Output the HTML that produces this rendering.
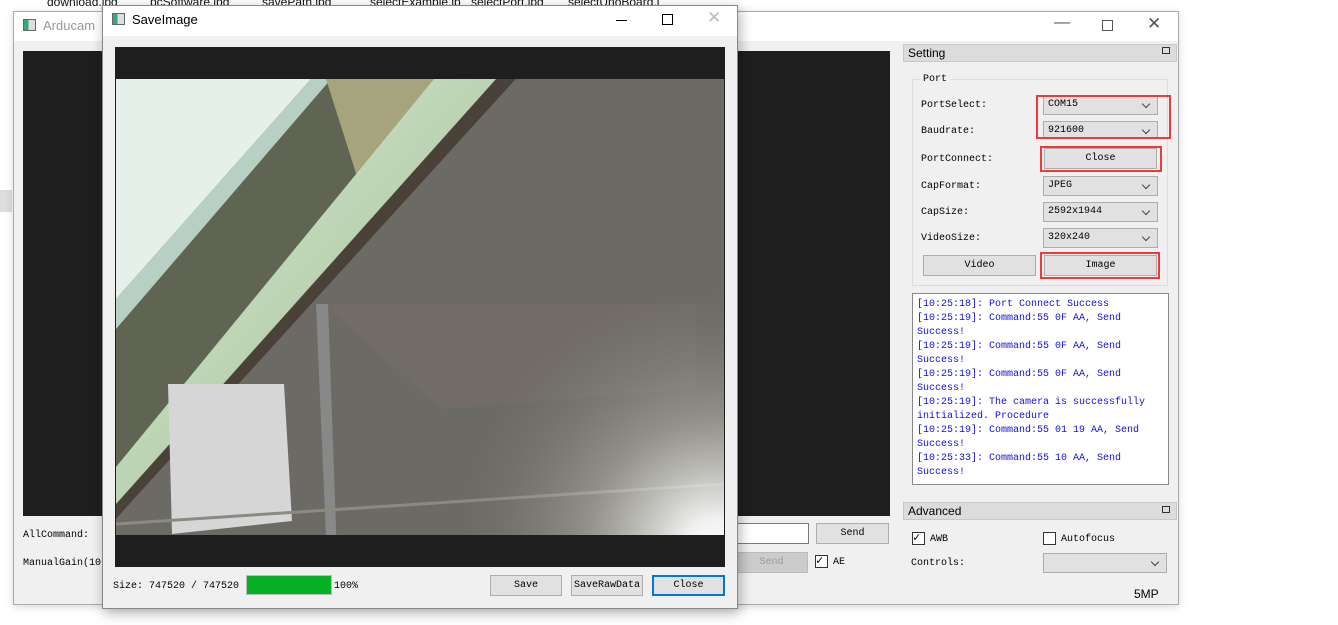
<!DOCTYPE html>
<html><head><meta charset="utf-8"><style>
*{margin:0;padding:0;box-sizing:border-box}
body{width:1338px;height:625px;background:#fff;position:relative;overflow:hidden;font-family:"Liberation Mono",monospace;font-size:10px;color:#000}
.a{position:absolute}
.btn{position:absolute;background:#e1e1e1;border:1px solid #adadad;text-align:center;font-size:10px;line-height:19px}
.cb{position:absolute;background:#e1e1e1;border:1px solid #adadad;font-size:10px;padding-left:4px;line-height:18px}
.cb:after{content:"";position:absolute;right:8px;top:5px;width:5px;height:5px;border-right:1px solid #444;border-bottom:1px solid #444;transform:rotate(45deg)}
.red{position:absolute;border:2px solid #f03a3a}
.lbl{position:absolute;font-size:10px}
.ui{font-family:"Liberation Sans",sans-serif}
.chk{position:absolute;width:13px;height:13px;border:1px solid #333;background:#fff}
.log div{line-height:14px}
</style></head><body>
<div class="a ui" style="left:0;top:0;width:1338px;height:12px;overflow:hidden;font-size:12px;color:#111">
<span class="a" style="left:47px;top:-5px">download.jpg</span><span class="a" style="left:150px;top:-5px">pcSoftware.jpg</span><span class="a" style="left:262px;top:-5px">savePath.jpg</span><span class="a" style="left:370px;top:-5px">selectExample.jp</span><span class="a" style="left:471px;top:-5px">selectPort.jpg</span><span class="a" style="left:568px;top:-5px">selectUnoBoard.j</span></div>
<div class="a" style="left:0;top:190px;width:12px;height:22px;background:#ddd"></div>
<div class="a" style="left:13px;top:11px;width:1166px;height:594px;background:#f0f0f0;border:1px solid #aaa;box-shadow:0 2px 8px rgba(0,0,0,.15)"></div>
<div class="a" style="left:14px;top:12px;width:1164px;height:29px;background:#fff"></div>
<div class="a" style="left:23px;top:19px;width:13px;height:12px;border:1px solid #666;background:linear-gradient(90deg,#3a7 0 40%,#ddd 40%)"></div>
<div class="a ui" style="left:43px;top:18px;font-size:13px;color:#999">Arducam</div>
<div class="a ui" style="left:1054px;top:14px;font-size:16px;color:#555">—</div>
<div class="a" style="left:1102px;top:20px;width:11px;height:11px;border:1px solid #555"></div>
<div class="a ui" style="left:1147px;top:14px;font-size:17px;color:#555">✕</div>
<div class="a" style="left:23px;top:51px;width:867px;height:465px;background:#1e1e1e"></div>
<div class="lbl" style="left:23px;top:530px">AllCommand:</div>
<div class="lbl" style="left:23px;top:558px">ManualGain(10</div>
<div class="a" style="left:735px;top:523px;width:74px;height:21px;background:#fff;border:1px solid #7a7a7a"></div>
<div class="btn" style="left:816px;top:523px;width:73px;height:21px">Send</div>
<div class="btn" style="left:735px;top:552px;width:73px;height:21px;color:#999;background:#ccc;border-color:#bbb">Send</div>
<div class="chk" style="left:815px;top:555px"></div><div class="a" style="left:816px;top:553px;font-size:12px">✓</div>
<div class="lbl" style="left:833px;top:557px">AE</div>
<div class="a ui" style="left:903px;top:44px;width:274px;height:18px;background:#dcdcdc;border:1px solid #c8c8c8;font-size:12px;padding-left:4px;line-height:17px">Setting</div>
<div class="a" style="left:1162px;top:47px;width:8px;height:7px;border:1px solid #333"></div>
<div class="a" style="left:912px;top:79px;width:256px;height:207px;border:1px solid #dcdcdc"></div>
<div class="lbl" style="left:920px;top:74px;background:#f0f0f0;padding:0 3px">Port</div>
<div class="lbl" style="left:921px;top:100px">PortSelect:</div>
<div class="lbl" style="left:921px;top:126px">Baudrate:</div>
<div class="lbl" style="left:921px;top:154px">PortConnect:</div>
<div class="lbl" style="left:921px;top:181px">CapFormat:</div>
<div class="lbl" style="left:921px;top:207px">CapSize:</div>
<div class="lbl" style="left:921px;top:233px">VideoSize:</div>
<div class="cb" style="left:1043px;top:95px;width:115px;height:20px">COM15</div>
<div class="cb" style="left:1043px;top:121px;width:115px;height:18px;line-height:17px">921600</div>
<div class="btn" style="left:1044px;top:148px;width:113px;height:21px">Close</div>
<div class="cb" style="left:1043px;top:176px;width:115px;height:20px">JPEG</div>
<div class="cb" style="left:1043px;top:202px;width:115px;height:20px">2592x1944</div>
<div class="cb" style="left:1043px;top:228px;width:115px;height:20px">320x240</div>
<div class="btn" style="left:923px;top:255px;width:113px;height:21px">Video</div>
<div class="btn" style="left:1044px;top:255px;width:113px;height:21px">Image</div>
<div class="red" style="left:1036px;top:95px;width:135px;height:44px"></div>
<div class="red" style="left:1040px;top:146px;width:122px;height:26px"></div>
<div class="red" style="left:1040px;top:252px;width:120px;height:27px"></div>
<div class="a log" style="left:912px;top:293px;width:257px;height:192px;background:#fff;border:1px solid #888;color:#1010e0;padding:4px 0 0 4px">
<div>[10:25:18]: Port Connect Success</div><div>[10:25:19]: Command:55 0F AA, Send</div><div>Success!</div><div>[10:25:19]: Command:55 0F AA, Send</div><div>Success!</div><div>[10:25:19]: Command:55 0F AA, Send</div><div>Success!</div><div>[10:25:19]: The camera is successfully</div><div>initialized. Procedure</div><div>[10:25:19]: Command:55 01 19 AA, Send</div><div>Success!</div><div>[10:25:33]: Command:55 10 AA, Send</div><div>Success!</div></div>
<div class="a ui" style="left:903px;top:502px;width:274px;height:18px;background:#dcdcdc;border:1px solid #c8c8c8;font-size:12px;padding-left:4px;line-height:17px">Advanced</div>
<div class="a" style="left:1162px;top:506px;width:8px;height:7px;border:1px solid #333"></div>
<div class="chk" style="left:912px;top:532px"></div><div class="a" style="left:913px;top:530px;font-size:12px">✓</div>
<div class="lbl" style="left:930px;top:534px">AWB</div>
<div class="chk" style="left:1043px;top:532px"></div>
<div class="lbl" style="left:1061px;top:534px">Autofocus</div>
<div class="lbl" style="left:911px;top:558px">Controls:</div>
<div class="cb" style="left:1043px;top:553px;width:124px;height:20px"></div>
<div class="a ui" style="left:1134px;top:587px;font-size:12px">5MP</div>
<div class="a" style="left:102px;top:5px;width:636px;height:604px;background:#f0f0f0;border:1px solid #888;box-shadow:2px 4px 12px rgba(0,0,0,.3)"></div>
<div class="a" style="left:103px;top:6px;width:634px;height:30px;background:#fff"></div>
<div class="a" style="left:112px;top:13px;width:13px;height:12px;border:1px solid #666;background:linear-gradient(90deg,#3a7 0 40%,#ddd 40%)"></div>
<div class="a ui" style="left:132px;top:12px;font-size:13px;color:#000">SaveImage</div>
<div class="a" style="left:616px;top:20px;width:11px;height:1px;background:#000"></div>
<div class="a" style="left:662px;top:14px;width:11px;height:11px;border:1px solid #000"></div>
<div class="a ui" style="left:707px;top:8px;font-size:17px;color:#bbb">✕</div>
<div class="a" style="left:115px;top:47px;width:610px;height:520px;background:#1e1e1e"></div>
<svg class="a" style="left:116px;top:79px" width="608" height="456" viewBox="0 0 608 456">
<defs>
<radialGradient id="g" cx="600" cy="470" r="260" gradientUnits="userSpaceOnUse"><stop offset="0" stop-color="#fff"/><stop offset=".12" stop-color="#fff" stop-opacity=".9"/><stop offset=".5" stop-color="#d8d8d0" stop-opacity=".35"/><stop offset="1" stop-color="#888" stop-opacity="0"/></radialGradient>
<linearGradient id="b" x1="0" y1="0" x2="1" y2="1"><stop offset="0" stop-color="#d8ecd8"/><stop offset="1" stop-color="#9cb88a"/></linearGradient>
</defs>
<rect width="608" height="456" fill="#6c6a64"/>
<polygon points="0,0 330,0 0,390" fill="#5f6552"/>
<polygon points="0,0 195,0 0,220" fill="#e6f0ea"/>
<polygon points="0,220 195,0 215,0 0,250" fill="#b8d0c4"/>
<polygon points="210,0 328,0 328,60 245,110" fill="#a5a47c"/>
<polygon points="318,0 400,0 0,440 0,388" fill="url(#b)"/>
<polygon points="380,0 400,0 0,440 0,425" fill="#4a4238"/>
<polygon points="208,225 580,225 580,310 325,330" fill="#747068" opacity=".6"/>
<polygon points="52,305 168,305 176,442 56,455" fill="#d6d6d6"/>
<polygon points="200,225 212,225 222,505 212,505" fill="#888"/>
<line x1="0" y1="445" x2="608" y2="405" stroke="#8a8a80" stroke-width="3"/>
<rect width="608" height="456" fill="url(#g)"/>
</svg>
<div class="lbl" style="left:113px;top:581px">Size: 747520 / 747520</div>
<div class="a" style="left:246px;top:575px;width:86px;height:20px;background:#06b025;border:1px solid #bcbcbc"></div>
<div class="lbl" style="left:334px;top:581px">100%</div>
<div class="btn" style="left:490px;top:575px;width:72px;height:21px">Save</div>
<div class="btn" style="left:571px;top:575px;width:72px;height:21px">SaveRawData</div>
<div class="btn" style="left:652px;top:575px;width:73px;height:21px;border:2px solid #0078d7;line-height:17px">Close</div>
</body></html>
